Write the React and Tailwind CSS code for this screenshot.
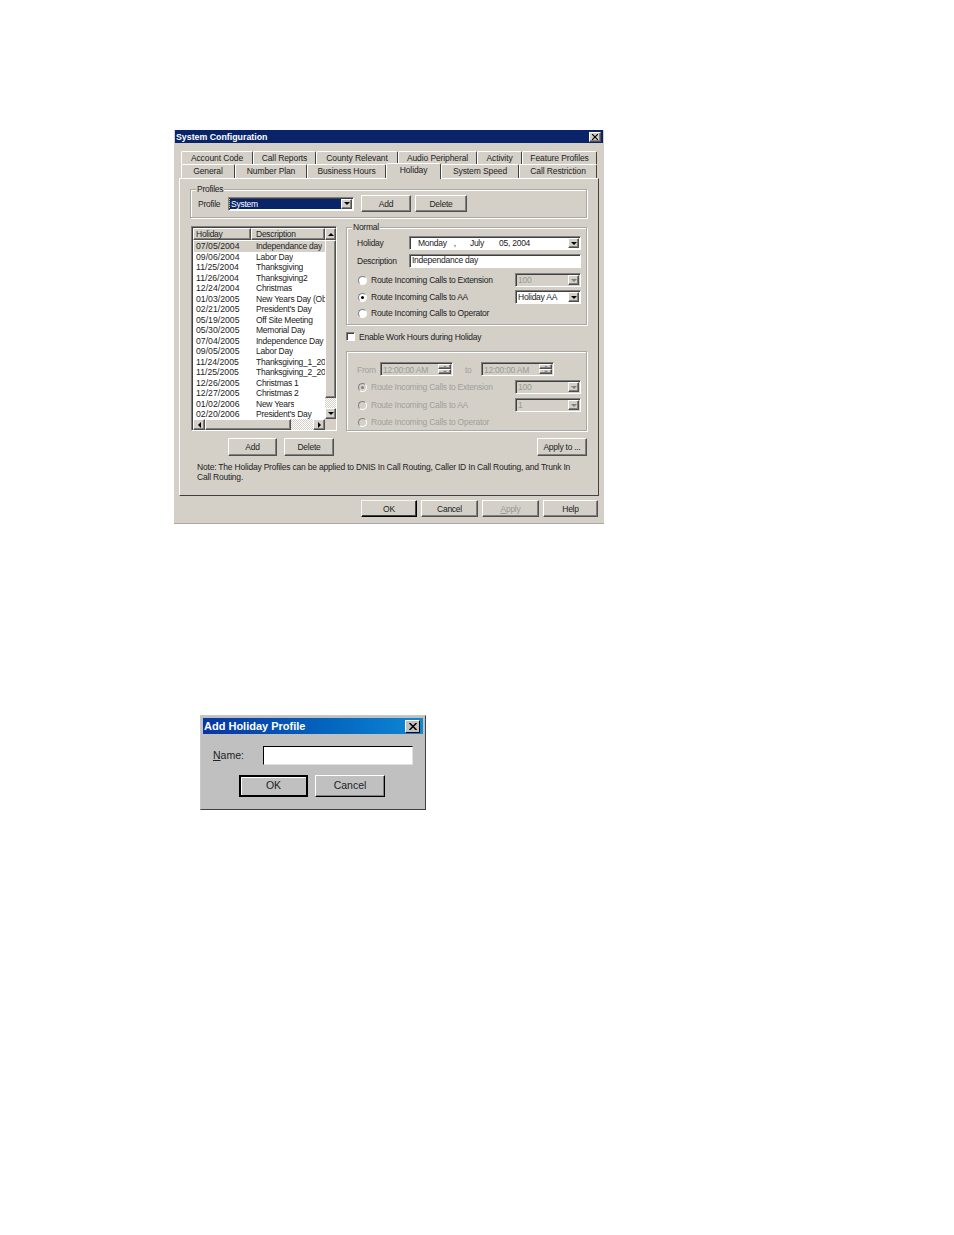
import React from 'react';

const raised = 'border border-t-white border-l-white border-r-[#505050] border-b-[#505050] shadow-[inset_-1px_-1px_0_#808080]';
const sunken = 'border border-t-[#808080] border-l-[#808080] border-r-white border-b-white shadow-[inset_1px_1px_0_#404040]';
const dither = 'bg-[repeating-conic-gradient(#ffffff_0_25%,#d4d0c8_0_50%)] bg-[length:2px_2px]';

const tabsTop = [
  ['Account Code', 'w-[72px]'],
  ['Call Reports', 'w-[63px]'],
  ['County Relevant', 'w-[82px]'],
  ['Audio Peripheral', 'w-[79px]'],
  ['Activity', 'w-[45px]'],
  ['Feature Profiles', 'w-[75px]'],
];

const tabsBottom = [
  ['General', 'w-[54px]'],
  ['Number Plan', 'w-[72px]'],
  ['Business Hours', 'w-[79px]'],
  ['Holiday', 'w-[55px]', true],
  ['System Speed', 'w-[78px]'],
  ['Call Restriction', 'w-[78px]'],
];

const holidays = [
  ['07/05/2004', 'Independance day'],
  ['09/06/2004', 'Labor Day'],
  ['11/25/2004', 'Thanksgiving'],
  ['11/26/2004', 'Thanksgiving2'],
  ['12/24/2004', 'Christmas'],
  ['01/03/2005', 'New Years Day (Observed)'],
  ['02/21/2005', "President's Day"],
  ['05/19/2005', 'Off Site Meeting'],
  ['05/30/2005', 'Memorial Day'],
  ['07/04/2005', 'Independence Day (Observed)'],
  ['09/05/2005', 'Labor Day'],
  ['11/24/2005', 'Thanksgiving_1_2005'],
  ['11/25/2005', 'Thanksgiving_2_2005'],
  ['12/26/2005', 'Christmas 1'],
  ['12/27/2005', 'Christmas 2'],
  ['01/02/2006', 'New Years'],
  ['02/20/2006', "President's Day"],
];

const Arrow = ({ dir = 'down', disabled = false }) => {
  const points = {
    down: '0,0 6,0 3,3',
    up: '0,3 6,3 3,0',
    left: '3,0 3,6 0,3',
    right: '0,0 0,6 3,3',
  };
  const wide = dir === 'up' || dir === 'down';
  return (
    <svg width={wide ? 6 : 3} height={wide ? 3 : 6} viewBox={wide ? '0 0 6 3' : '0 0 3 6'}>
      <polygon points={points[dir]} fill={disabled ? '#808080' : '#000000'} />
    </svg>
  );
};

const ScrollBtn = ({ dir, className = '', disabled }) => (
  <div className={`bg-[#d4d0c8] flex items-center justify-center shrink-0 ${raised} ${className}`}>
    <Arrow dir={dir} disabled={disabled} />
  </div>
);

const Btn = ({ className = '', children, dark }) => (
  <button className={`bg-[#d4d0c8] flex items-center justify-center ${dark ? 'border border-t-[#f4f4f4] border-l-[#f4f4f4] border-r-black border-b-black shadow-[inset_-1px_-1px_0_#404040]' : raised} ${className}`}>
    {children}
  </button>
);

const Group = ({ label, className = '', children }) => (
  <div className={`relative border border-[#a8a8a4] shadow-[1px_1px_0_#ffffff,inset_1px_1px_0_#ffffff] ${className}`}>
    {label && <span className="absolute -top-[6px] left-[5px] bg-[#d4d0c8] px-[1px] leading-[10px]">{label}</span>}
    {children}
  </div>
);

const Select = ({ className = '', disabled, children }) => (
  <div className={`flex items-center h-[14px] ${sunken} ${disabled ? 'bg-[#d4d0c8] text-[#9a9a96]' : 'bg-white'} ${className}`}>
    <span className="flex-1 pl-[2px] truncate">{children}</span>
    <ScrollBtn dir="down" disabled={disabled} className="w-[11px] h-[10px] mr-[1px]" />
  </div>
);

const Radio = ({ checked, disabled, label, className = '' }) => (
  <div className={`flex items-center ${disabled ? 'text-[#a0a09c]' : ''} ${className}`}>
    <span className={`w-[9px] h-[9px] rounded-full border border-t-[#808080] border-l-[#808080] border-r-white border-b-white flex items-center justify-center shrink-0 ${disabled ? 'bg-[#d4d0c8]' : 'bg-white'}`}>
      {checked && <span className={`w-[3px] h-[3px] rounded-full ${disabled ? 'bg-[#808080]' : 'bg-black'}`} />}
    </span>
    <span className="ml-[4px] whitespace-nowrap">{label}</span>
  </div>
);

const TimeField = ({ className = '' }) => (
  <div className={`flex items-center w-[73px] h-[14px] bg-[#d4d0c8] text-[#9a9a96] ${sunken} ${className}`}>
    <span className="flex-1 pl-[2px] pt-[1px] whitespace-nowrap">12:00:00 AM</span>
    <div className="flex flex-col w-[13px] h-[10px] mr-[1px]">
      <ScrollBtn dir="up" disabled className="h-[5px] [&>svg]:scale-75" />
      <ScrollBtn dir="down" disabled className="h-[5px] [&>svg]:scale-75" />
    </div>
  </div>
);

const HolidayList = () => (
  <div className={`w-[146px] h-[205px] ml-[1px] pl-[1px] py-[1px] bg-[#d4d0c8] ${sunken}`}>
    <div className="flex h-[12px]">
      <div className="w-[132px] flex">
        <div className={`w-[58px] pl-[2px] leading-[10px] ${raised}`}>Holiday</div>
        <div className={`flex-1 pl-[4px] leading-[10px] ${raised}`}>Description</div>
      </div>
      <ScrollBtn dir="up" className="w-[11px]" />
    </div>
    <div className="flex h-[179px]">
      <div className="w-[132px] bg-white overflow-hidden pt-[1px] pl-[1px]">
        {holidays.map(([date, name], i) => (
          <div key={date} className={`flex h-[10.5px] leading-[10.5px] whitespace-nowrap ${i === 0 ? 'bg-[#d4d0c8]' : ''}`}>
            <span className="w-[62px] pl-[2px] shrink-0 text-[8.7px] tracking-normal">{date}</span>
            <span className="overflow-hidden">{name}</span>
          </div>
        ))}
      </div>
      <div className="w-[11px] flex flex-col">
        <div className={`h-[158px] bg-[#d4d0c8] ${raised}`} />
        <div className={`flex-1 ${dither}`} />
        <ScrollBtn dir="down" className="h-[11px]" />
      </div>
    </div>
    <div className="flex h-[11px]">
      <ScrollBtn dir="left" className="w-[12px]" />
      <div className={`w-[86px] bg-[#d4d0c8] ${raised}`} />
      <div className={`w-[22px] ${dither}`} />
      <ScrollBtn dir="right" className="w-[12px]" />
    </div>
  </div>
);

const NormalGroup = () => (
  <Group label="Normal" className="w-[241px] h-[98px] mt-[1px] pl-[10px] pt-[8px]">
    <div className="flex items-center h-[14px]">
      <span className="w-[52px]">Holiday</span>
      <div className={`flex items-center w-[172px] h-[14px] bg-white ${sunken}`}>
        <span className="ml-[8px]">Monday</span>
        <span className="ml-[7px]">,</span>
        <span className="ml-[14px]">July</span>
        <span className="ml-[15px] flex-1">05, 2004</span>
        <ScrollBtn dir="down" className="w-[11px] h-[10px] mr-[1px]" />
      </div>
    </div>
    <div className="flex items-center h-[14px] mt-[4px]">
      <span className="w-[52px]">Description</span>
      <div className={`w-[172px] h-[14px] pl-[2px] leading-[11px] bg-white ${sunken}`}>Independance day</div>
    </div>
    <div className="flex items-center justify-between h-[14px] mt-[5px] mr-[5px]">
      <Radio label="Route Incoming Calls to Extension" className="ml-[1px]" />
      <Select disabled className="w-[66px]">100</Select>
    </div>
    <div className="flex items-center justify-between h-[14px] mt-[3px] mr-[5px]">
      <Radio checked label="Route Incoming Calls to AA" className="ml-[1px]" />
      <Select className="w-[66px]">Holiday AA</Select>
    </div>
    <Radio label="Route Incoming Calls to Operator" className="ml-[1px] mt-[4px]" />
  </Group>
);

const WorkHoursGroup = () => (
  <Group className="w-[241px] h-[80px] mt-[10px] pl-[10px] pt-[10px] text-[#a0a09c]">
    <div className="flex items-center h-[14px]">
      <span className="w-[23px] pt-[2px]">From</span>
      <TimeField />
      <span className="ml-[12px] w-[16px] pt-[2px]">to</span>
      <TimeField />
    </div>
    <div className="flex items-center justify-between h-[14px] mt-[4px] mr-[5px]">
      <Radio disabled checked label="Route Incoming Calls to Extension" className="ml-[1px]" />
      <Select disabled className="w-[66px]">100</Select>
    </div>
    <div className="flex items-center justify-between h-[14px] mt-[4px] mr-[5px]">
      <Radio disabled label="Route Incoming Calls to AA" className="ml-[1px]" />
      <Select disabled className="w-[66px]">1</Select>
    </div>
    <Radio disabled label="Route Incoming Calls to Operator" className="ml-[1px] mt-[5px]" />
  </Group>
);

const SystemConfiguration = () => (
  <div className="w-[430px] h-[394px] bg-[#d4d0c8] border-b border-[#a8a8a4] text-[8.5px] tracking-[-0.25px] leading-[10px] text-[#222222]">
    <div className="h-[13px] mx-[1px] bg-[#0a246a] flex items-center justify-between pl-[1px] pr-[2px] text-white font-bold text-[8.8px] tracking-normal">
      <span>System Configuration</span>
      <div className={`w-[12px] h-[10px] bg-[#d4d0c8] flex items-center justify-center ${raised}`}>
        <svg width="6" height="6" viewBox="0 0 6 6">
          <path d="M0 0L6 6M6 0L0 6" stroke="#000000" strokeWidth="1.2" />
        </svg>
      </div>
    </div>

    {/* tabs */}
    <div className="flex pl-[7px] mt-[8px] h-[13px] tracking-[-0.1px]">
      {tabsTop.map(([name, w]) => (
        <div key={name} className={`h-[13px] text-center leading-[13px] border-l border-t border-r border-t-white border-l-white border-r-[#404040] rounded-t-[2px] ${w}`}>{name}</div>
      ))}
    </div>
    <div className="flex pl-[7px] h-[14px] relative z-10 tracking-[-0.1px]">
      {tabsBottom.map(([name, w, active]) => (
        <div
          key={name}
          className={`text-center border-l border-t border-r border-t-white border-l-white border-r-[#404040] rounded-t-[2px] bg-[#d4d0c8] ${w} ${active ? 'h-[16px] -mt-[1px] leading-[12px]' : 'h-[14px] leading-[13px]'}`}
        >
          {name}
        </div>
      ))}
    </div>

    <div className="w-[420px] h-[318px] ml-[5px] pt-[10px] pl-[10px] border border-t-white border-l-white border-r-[#404040] border-b-[#404040]">
      <Group label="Profiles" className="w-[397px] h-[29px] flex items-center pl-[7px]">
        <span className="w-[30px]">Profile</span>
        <Select className="w-[126px]">
          <span className="inline-block w-[112px] bg-[#0a246a] text-white outline-1 outline-dotted outline-[#d8c878] pl-[1px] -ml-[1px]">System</span>
        </Select>
        <Btn className="w-[50px] h-[17px] ml-[7px]">Add</Btn>
        <Btn className="w-[52px] h-[17px] ml-[4px]">Delete</Btn>
      </Group>

      <div className="flex h-[206px] mt-[8px]">
        <HolidayList />
        <div className="ml-[9px]">
          <NormalGroup />
          <label className="flex items-center h-[9px] mt-[7px]">
            <span className={`w-[9px] h-[9px] bg-white ${sunken}`} />
            <span className="ml-[4px]">Enable Work Hours during Holiday</span>
          </label>
          <WorkHoursGroup />
        </div>
      </div>

      <div className="flex h-[18px] mt-[6px] pl-[38px]">
        <Btn className="w-[49px]">Add</Btn>
        <Btn className="w-[50px] ml-[7px]">Delete</Btn>
        <Btn className="w-[50px] ml-[203px]">Apply to ...</Btn>
      </div>

      <p className="w-[376px] ml-[7px] mt-[6px] leading-[10px] tracking-[-0.2px]">
        Note: The Holiday Profiles can be applied to DNIS In Call Routing, Caller ID In Call Routing, and Trunk In Call Routing.
      </p>
    </div>

    <div className="flex justify-end gap-[4px] pr-[6px] mt-[4px]">
      <Btn dark className="w-[56px] h-[17px]">OK</Btn>
      <Btn className="w-[57px] h-[17px]">Cancel</Btn>
      <Btn className="w-[57px] h-[17px] text-[#9a9a96]"><span className="underline">A</span>pply</Btn>
      <Btn className="w-[55px] h-[17px]">Help</Btn>
    </div>
  </div>
);

const AddHolidayProfile = () => (
  <div className="w-[226px] h-[95px] bg-[#c0c0c0] p-[2px] border border-t-[#c8c8c8] border-l-[#c8c8c8] border-r-[#404040] border-b-[#404040] text-[10.5px] text-[#222222]">
    <div className="h-[16px] bg-gradient-to-r from-[#0a35a0] to-[#1088d4] flex items-center justify-between pl-[1px] pr-[3px] text-white font-bold text-[11px]">
      <span>Add Holiday Profile</span>
      <div className="w-[15px] h-[13px] bg-[#c0c0c0] flex items-center justify-center border border-t-white border-l-white border-r-black border-b-black">
        <svg width="8" height="7" viewBox="0 0 8 7">
          <path d="M0.5 0L7.5 7M7.5 0L0.5 7" stroke="#000000" strokeWidth="1.5" />
        </svg>
      </div>
    </div>
    <div className="flex items-center h-[19px] mt-[12px]">
      <span className="w-[60px] pl-[10px]"><span className="underline">N</span>ame:</span>
      <div className="w-[150px] h-[19px] bg-white border border-t-black border-l-black border-r-[#e0e0e0] border-b-[#e0e0e0]" />
    </div>
    <div className="flex mt-[10px] pl-[36px] gap-[7px]">
      <button className="w-[69px] h-[22px] bg-[#c0c0c0] border-2 border-black shadow-[inset_1px_1px_0_#ffffff]">OK</button>
      <button className="w-[70px] h-[22px] bg-[#c0c0c0] border border-t-white border-l-white border-r-black border-b-black shadow-[inset_-1px_-1px_0_#808080]">Cancel</button>
    </div>
  </div>
);

const App = () => {
  return (
    <div className="min-h-[1235px] bg-white pt-[130px] pl-[174px] font-['Liberation_Sans',Arial,sans-serif]">
      <SystemConfiguration />
      <div className="mt-[191px] ml-[26px]">
        <AddHolidayProfile />
      </div>
    </div>
  );
};

export default App;
